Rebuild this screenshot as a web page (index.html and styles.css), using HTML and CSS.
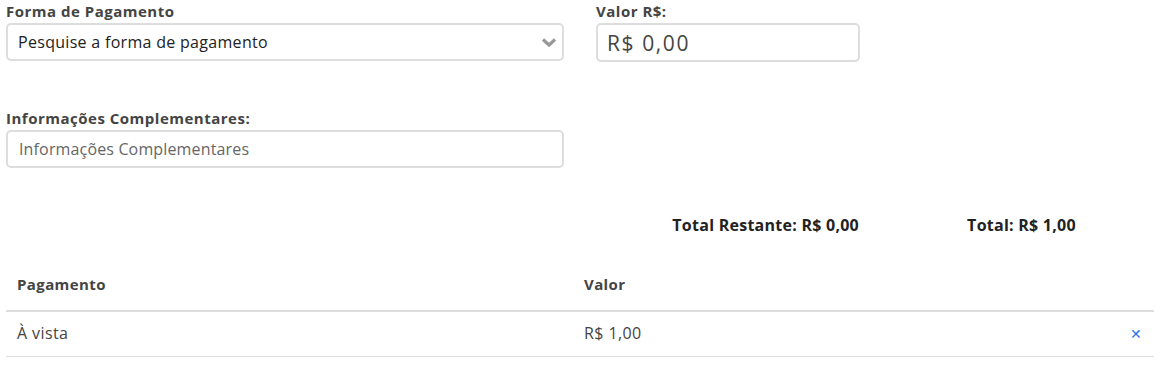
FILE: index.html
```html
<!DOCTYPE html>
<html lang="pt-BR">
<head>
  <meta charset="UTF-8">
  <title>Pagamento</title>
  <link rel="stylesheet" href="styles.css">
</head>
<body>
  <div class="form-pagamento">
    <div class="row">
      <div class="field">
        <label>Forma de Pagamento</label>
        <div class="select-box">
          <span>Pesquise a forma de pagamento</span>
          <svg class="chevron" width="16" height="11" viewBox="0 0 16 11">
            <path d="M2 2.5 L8 8 L14 2.5" fill="none" stroke="#999" stroke-width="3.2"/>
          </svg>
        </div>
      </div>
      <div class="field">
        <label>Valor R$:</label>
        <input class="input valor" type="text" value="R$ 0,00">
      </div>
    </div>

    <div class="row info">
      <div class="field">
        <label>Informações Complementares:</label>
        <input class="input" type="text" placeholder="Informações Complementares">
      </div>
    </div>

    <div class="totais">
      <div class="total-restante">Total Restante: R$ 0,00</div>
      <div class="total">Total: R$ 1,00</div>
    </div>

    <table class="tabela">
      <thead>
        <tr>
          <th>Pagamento</th>
          <th>Valor</th>
          <th></th>
        </tr>
      </thead>
      <tbody>
        <tr>
          <td>À vista</td>
          <td>R$ 1,00</td>
          <td class="remover">&#x2715;</td>
        </tr>
      </tbody>
    </table>
  </div>
</body>
</html>
```

FILE: styles.css
```css
body {
  margin: 0;
  font-family: "Open Sans", Arial, sans-serif;
  color: #333;
  background: #fff;
}

.form-pagamento {
  padding: 0 12px 0 6px;
}

.row {
  display: grid;
  grid-template-columns: 558px 264px;
  column-gap: 32px;
}

.row.info {
  margin-top: 45px;
}

.field label {
  display: block;
  font-size: 15px;
  font-weight: bold;
  letter-spacing: 0.5px;
  color: #444;
  line-height: 22px;
  margin-bottom: 1px;
}

.select-box,
.input {
  box-sizing: border-box;
  width: 100%;
  height: 38px;
  border: 2px solid #ddd;
  border-radius: 5px;
  background: #fff;
  font-family: inherit;
}

.select-box {
  display: flex;
  align-items: center;
  justify-content: space-between;
  padding: 0 5px 0 10px;
  font-size: 16px;
  letter-spacing: 0.3px;
  color: #222;
}

.input {
  display: block;
  padding: 0 11px;
  font-size: 16px;
  letter-spacing: 0.15px;
  color: #333;
  outline: none;
}

.input::placeholder {
  color: #666;
}

.input.valor {
  height: 39px;
  padding: 0 10px 0 9px;
  font-size: 21px;
  letter-spacing: 1.6px;
  color: #444;
}

.totais {
  display: grid;
  grid-template-columns: 853px 265px;
  column-gap: 30px;
  margin-top: 46px;
  font-size: 16px;
  font-weight: bold;
  letter-spacing: 0.25px;
  color: #222;
}

.total-restante {
  text-align: right;
}

.total {
  text-align: center;
}

.tabela {
  width: 100%;
  margin-top: 37px;
  border-collapse: collapse;
  font-size: 16px;
  letter-spacing: 0.4px;
}

.tabela th {
  text-align: left;
  font-size: 15px;
  color: #444;
  padding: 1px 11px 16px;
  border-bottom: 2px solid #ddd;
}

.tabela td {
  padding: 10px 11px 12px;
  color: #444;
  border-bottom: 1px solid #ddd;
}

.tabela th:first-child,
.tabela td:first-child {
  width: 545px;
}

.tabela .remover {
  text-align: right;
  color: #2277ee;
  font-size: 14px;
  padding-right: 12px;
}
```
